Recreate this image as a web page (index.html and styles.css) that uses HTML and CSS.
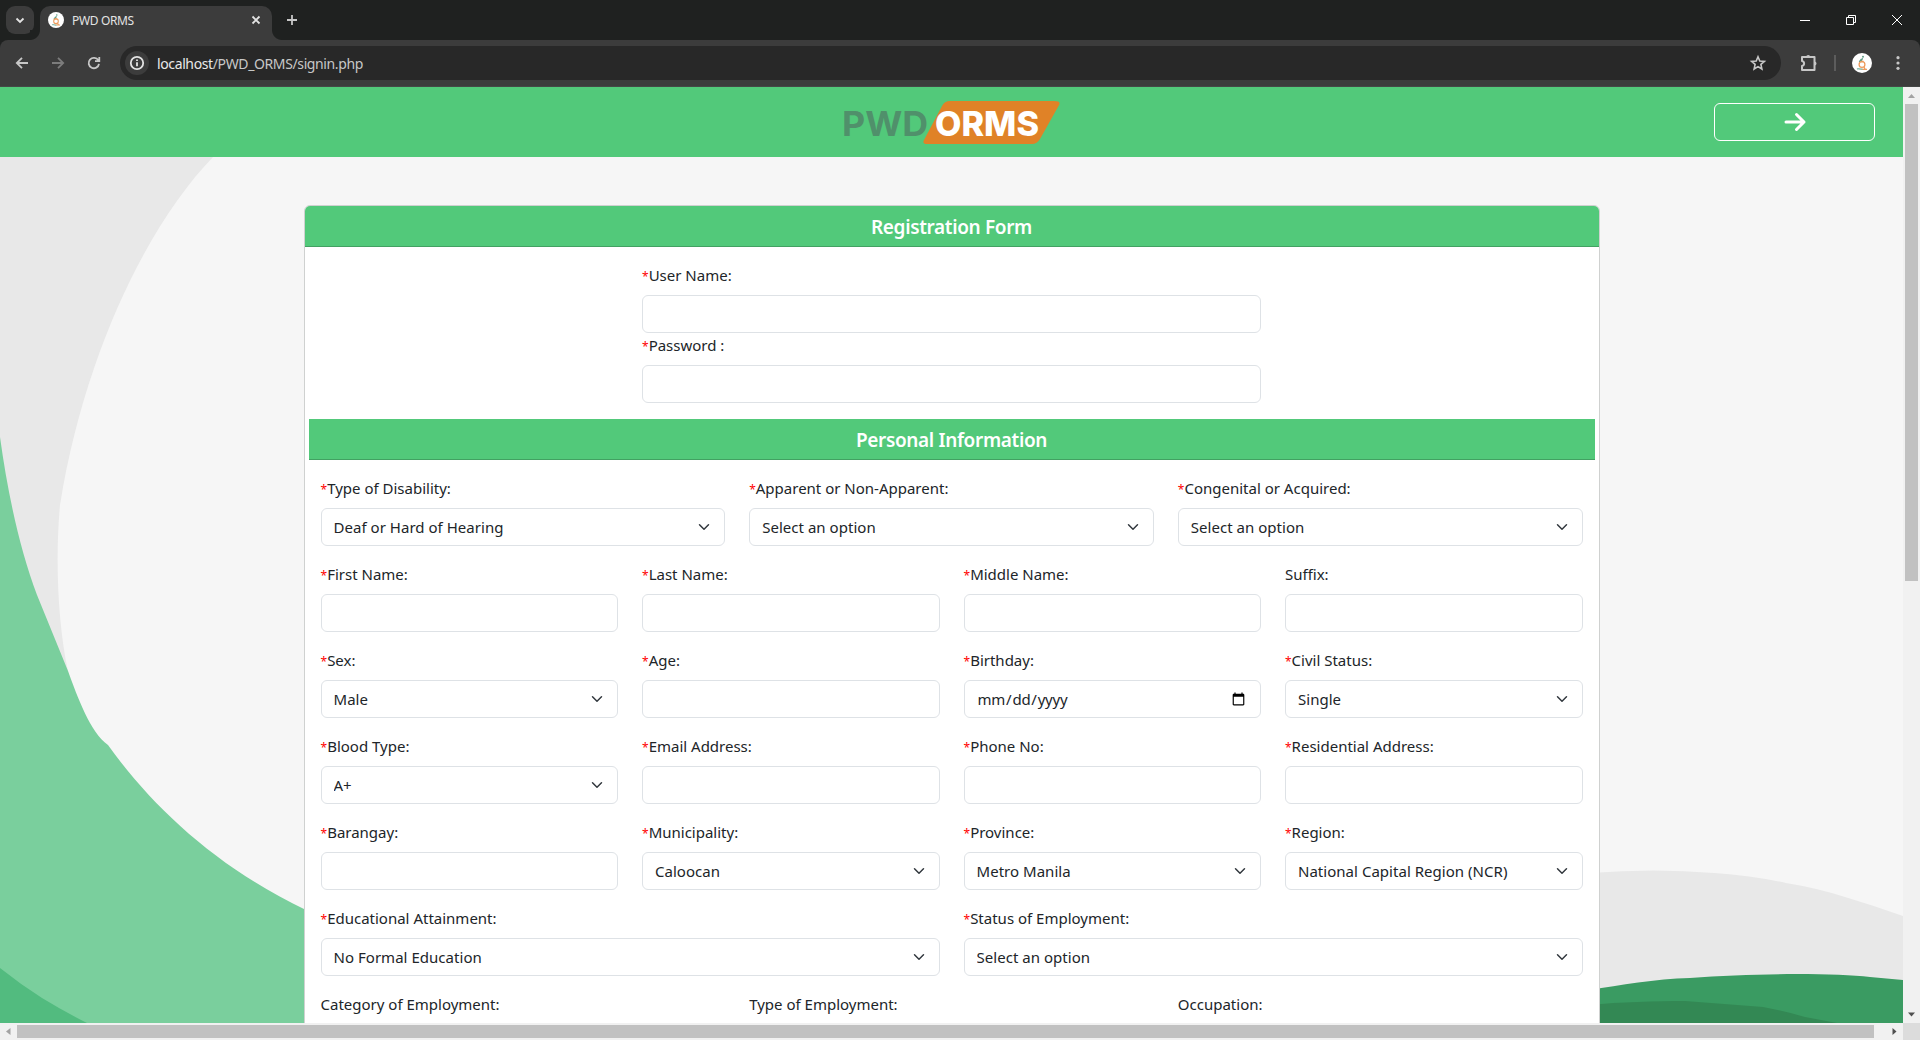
FILE: index.html
```html
<!DOCTYPE html>
<html lang="en">
<head>
<meta charset="utf-8">
<title>PWD ORMS</title>
<link rel="stylesheet" href="styles.css">
</head>
<body>
<svg width="0" height="0" class="defs" aria-hidden="true">
  <symbol id="site-icon" viewBox="0 0 20 20">
    <circle cx="10" cy="10" r="10" fill="#fff"/>
    <circle cx="11" cy="3.800" r="1" fill="#5f9c85"/>
    <path d="M10.600 5.300 9 8.500M9.600 6 7.300 9" stroke="#5f9c85" stroke-width="1.300" fill="none"/>
    <circle cx="10" cy="11.500" r="2.900" stroke="#ee9b5c" stroke-width="1.300" fill="none"/>
    <path d="M9 8.500h2.500M12 14l1 2M9 16.300h6" stroke="#ee9b5c" stroke-width="1.300" fill="none"/>
    <path d="M5 16c2-.6 3 .3 5.500.3" stroke="#8dbfb1" stroke-width="1.500" fill="none"/>
  </symbol>
</svg>
<div class="window">
  <header class="tabstrip">
    <button class="tab-search" aria-label="Search tabs"><svg width="28" height="28" viewBox="0 0 28 28"><path d="M10.500 12.500 14 16l3.500-3.500" class="line bright"/></svg></button>
    <div class="tab">
      <svg width="16" height="16"><use href="#site-icon"/></svg>
      <span class="tab-title">PWD ORMS</span>
      <svg width="16" height="16" viewBox="0 0 16 16"><path d="m4.500 4.500 7 7m0-7-7 7" class="line bright"/></svg>
    </div>
    <svg class="new-tab" width="16" height="16" viewBox="0 0 16 16"><path d="M8 3v10M3 8h10" class="line"/></svg>
    <div class="window-controls">
      <svg width="46" height="40" viewBox="0 0 46 40"><path d="M18 20.500h10" stroke="#fff"/></svg>
      <svg width="46" height="40" viewBox="0 0 46 40"><path d="M18.500 17.500h7v7h-7zM20.500 17v-1.500h7v7H26" stroke="#fff" fill="none"/></svg>
      <svg width="46" height="40" viewBox="0 0 46 40"><path d="m18 15 10 10m0-10L18 25" stroke="#fff"/></svg>
    </div>
  </header>
  <nav class="toolbar">
    <svg width="16" height="16" viewBox="0 0 16 16"><path d="M14 8H3m5-5.200L2.800 8 8 13.200" class="line"/></svg>
    <svg width="16" height="16" viewBox="0 0 16 16"><path d="M2 8h11M8 2.800 13.200 8 8 13.200" class="line dim"/></svg>
    <svg width="16" height="16" viewBox="0 0 16 16"><path d="M13 8.800A5.200 5.200 0 1 1 12.300 5.300M13.300 2v4.200H9" class="line"/></svg>
    <div class="omnibox">
      <span class="site-info"><svg width="16" height="16" viewBox="0 0 16 16"><circle cx="8" cy="8" r="6.200" class="line bright"/><path d="M8 7.200v4M8 4.500v1.600" class="line bright"/></svg></span>
      <span class="url"><b>localhost</b>/PWD_ORMS/signin.php</span>
      <svg width="18" height="18" viewBox="0 0 18 18"><path d="m9 2.700 1.800 4.300 4.600.4-3.500 3 1 4.600L9 12.600 5.100 15l1-4.600-3.500-3 4.600-.4z" class="line thin"/></svg>
    </div>
    <svg class="extensions" width="20" height="20" viewBox="0 0 20 20"><path d="M3 4h12.500v13H3v-4c2.800-.5 2.800-4.500 0-5z" class="line round"/><path d="M7.200 4a2 2 0 0 1 4 0zM15.500 8.500a2 2 0 0 1 0 4z" fill="#c7c7c7"/></svg>
    <span class="divider"></span>
    <svg class="profile" width="20" height="20"><use href="#site-icon"/></svg>
    <svg class="menu" width="16" height="16" viewBox="0 0 16 16" fill="#c7c7c7"><circle cx="8" cy="2.700" r="1.600"/><circle cx="8" cy="8" r="1.600"/><circle cx="8" cy="13.300" r="1.600"/></svg>
  </nav>
  <div class="viewport">
    <main class="page">
      <svg class="backdrop" width="1903" height="936" viewBox="0 87 1903 936" aria-hidden="true">
        <path fill="#e8e8e8" d="M0 157H213C150 222 85 350 60 505C55 560 58 625 68 671L80 720H0z"/>
        <path fill="#7acf9d" d="M0 437C8 495 20 550 37 595L68 671C78 698 90 732 108 745C153 808 218 868 306 910V1023H0z"/>
        <path fill="#52bb7f" d="M0 968Q20 984 42 998Q65 1012 87 1023H0z"/>
        <path fill="#e8e8e8" d="M1590 873Q1655 868 1714 873Q1755 876 1786 883Q1817 888 1845 897Q1875 906 1903 916V1023H1590z"/>
        <path fill="#3a9b62" d="M1590 990C1620 985 1655 979 1690 978C1755 973 1835 973 1870 977L1903 980V1023H1590z"/>
        <path fill="#338854" d="M1590 1005C1620 1002 1655 1001 1685 1001L1763 1007Q1785 1011 1805 1017L1837 1023H1590z"/>
      </svg>
      <div class="site-header">
        <svg class="logo" width="220" height="50" viewBox="0 0 220 50" role="img" aria-label="PWD ORMS">
          <path d="M106 4h107q8 0 4.500 5L199 42q-3 5-8 5H86q-5 0-3-4L101 9q2.500-5 8-5z" fill="#e08227"/>
          <text x="1" y="39" textLength="86" lengthAdjust="spacingAndGlyphs" class="logo-pwd">PWD</text>
          <text x="94" y="39" textLength="104" lengthAdjust="spacingAndGlyphs" class="logo-orms">ORMS</text>
        </svg>
        <button class="signin" aria-label="Sign in"><svg width="24" height="22" viewBox="0 0 24 22"><path d="M3 11h18M13.500 3.500 21 11l-7.500 7.500" fill="none" stroke="#fff" stroke-width="3" stroke-linecap="round" stroke-linejoin="round"/></svg></button>
      </div>
      <form class="card">
        <h5 class="card-header top">Registration Form</h5>
        <div class="card-body">
          <div class="account">
            <label class="field"><span><i>*</i>User Name:</span><input type="text"></label>
            <label class="field"><span><i>*</i>Password :</span><input type="text"></label>
          </div>
          <h5 class="card-header">Personal Information</h5>
          <div class="fields">
            <label class="field third"><span><i>*</i>Type of Disability:</span><select><option>Deaf or Hard of Hearing</option></select></label>
            <label class="field third"><span><i>*</i>Apparent or Non-Apparent:</span><select><option>Select an option</option></select></label>
            <label class="field third"><span><i>*</i>Congenital or Acquired:</span><select><option>Select an option</option></select></label>
            <label class="field"><span><i>*</i>First Name:</span><input type="text"></label>
            <label class="field"><span><i>*</i>Last Name:</span><input type="text"></label>
            <label class="field"><span><i>*</i>Middle Name:</span><input type="text"></label>
            <label class="field"><span>Suffix:</span><input type="text"></label>
            <label class="field"><span><i>*</i>Sex:</span><select><option>Male</option></select></label>
            <label class="field"><span><i>*</i>Age:</span><input type="text"></label>
            <label class="field"><span><i>*</i>Birthday:</span><input type="date"></label>
            <label class="field"><span><i>*</i>Civil Status:</span><select><option>Single</option></select></label>
            <label class="field"><span><i>*</i>Blood Type:</span><select><option>A+</option></select></label>
            <label class="field"><span><i>*</i>Email Address:</span><input type="text"></label>
            <label class="field"><span><i>*</i>Phone No:</span><input type="text"></label>
            <label class="field"><span><i>*</i>Residential Address:</span><input type="text"></label>
            <label class="field"><span><i>*</i>Barangay:</span><input type="text"></label>
            <label class="field"><span><i>*</i>Municipality:</span><select><option>Caloocan</option></select></label>
            <label class="field"><span><i>*</i>Province:</span><select><option>Metro Manila</option></select></label>
            <label class="field"><span><i>*</i>Region:</span><select><option>National Capital Region (NCR)</option></select></label>
            <label class="field half"><span><i>*</i>Educational Attainment:</span><select><option>No Formal Education</option></select></label>
            <label class="field half"><span><i>*</i>Status of Employment:</span><select><option>Select an option</option></select></label>
            <div class="field third"><span>Category of Employment:</span></div>
            <div class="field third"><span>Type of Employment:</span></div>
            <div class="field third"><span>Occupation:</span></div>
          </div>
        </div>
      </form>
    </main>
    <div class="vbar">
      <svg width="17" height="17" viewBox="0 0 17 17"><path d="M5 11h7L8.500 7z" fill="#a3a3a3"/></svg>
      <span class="thumb"></span>
      <svg width="17" height="17" viewBox="0 0 17 17"><path d="M5 6.500h7l-3.500 4z" fill="#505050"/></svg>
    </div>
    <div class="hbar">
      <svg width="17" height="17" viewBox="0 0 17 17"><path d="M10.500 5v7L6 8.500z" fill="#a3a3a3"/></svg>
      <span class="thumb"></span>
      <svg width="17" height="17" viewBox="0 0 17 17"><path d="M6.500 5v7l4-3.500z" fill="#505050"/></svg>
    </div>
    <div class="corner"></div>
  </div>
</div>
</body>
</html>
```
FILE: styles.css
```css
* { box-sizing: border-box; }
body { margin: 0; overflow: hidden; font-family: "Noto Sans", "Liberation Sans", sans-serif; }
button { padding: 0; border: 0; background: none; }
.defs { position: absolute; }
.window { display: flex; flex-direction: column; width: 1920px; height: 1040px; background: #1f2120; }

/* Browser chrome */
.line { fill: none; stroke: #c7c7c7; stroke-width: 1.8; }
.line.bright { stroke: #e3e3e3; }
.line.dim { stroke: #7c7c7c; }
.line.thin { stroke-width: 1.6; }
.line.round { stroke-linejoin: round; stroke-width: 2; }
.tabstrip { display: flex; align-items: flex-start; height: 40px; background: #1f2120; }
.tab-search { width: 28px; height: 28px; margin: 6px 6px 0; border-radius: 9px; background: #3c3c3c; }
.tab { position: relative; display: flex; align-items: center; width: 232px; height: 34px; margin-top: 6px; padding: 0 8px 6px; border-radius: 10px 10px 0 0; background: #3c3c3c; }
.tab::before, .tab::after { content: ""; position: absolute; bottom: 0; width: 10px; height: 10px; }
.tab::before { left: -10px; background: radial-gradient(circle at 0 0, #1f2120 9.5px, #3c3c3c 10.5px); }
.tab::after { right: -10px; background: radial-gradient(circle at 100% 0, #1f2120 9.5px, #3c3c3c 10.5px); }
.tab-title { flex: 1; padding-left: 8px; color: #e3e3e3; font-size: 12px; letter-spacing: -0.35px; }
.new-tab { margin: 12px 0 0 12px; }
.window-controls { display: flex; margin-left: auto; }
.toolbar { display: flex; align-items: center; height: 47px; padding: 0 14px; border-bottom: 1px solid #454746; border-radius: 8px 8px 0 0; background: #3c3c3c; }
.toolbar > svg { flex: none; }
.toolbar > svg:nth-child(2), .toolbar > svg:nth-child(3) { margin-left: 20px; }
.omnibox { display: flex; align-items: center; width: 1662px; height: 34px; margin-left: 18px; padding: 0 14px 0 5px; border-radius: 17px; background: #282828; }
.site-info { display: grid; place-items: center; width: 24px; height: 24px; border-radius: 12px; background: #3c3c3c; }
.url { flex: 1; padding-left: 8px; color: #c7c7c7; font-size: 14px; letter-spacing: -0.38px; }
.url b { color: #e8e8e8; font-weight: 400; }
.extensions { margin-left: 18px; }
.divider { width: 2px; height: 16px; margin: 0 16px 0 15px; background: #5c5c5c; }
.menu { margin-left: 18px; }

/* Scrolling viewport */
.viewport { display: grid; grid-template: 936px 17px / 1903px 17px; }
.vbar, .hbar { display: flex; background: #f1f1f1; }
.vbar { flex-direction: column; }
.thumb { background: #c1c1c1; }
.vbar .thumb { width: 13px; height: 477px; margin: 0 2px; }
.vbar svg:last-child { margin-top: auto; }
.hbar .thumb { width: 1857px; height: 13px; margin: 2px 0; }
.hbar svg:last-child { margin-left: auto; }
.corner { background: #dcdcdc; }

/* Page */
.page { position: relative; height: 936px; overflow: hidden; background: #f6f6f6; color: #212529; }
.backdrop { position: absolute; inset: 0; }
.site-header { position: relative; display: flex; justify-content: flex-end; align-items: center; height: 70px; padding-right: 28px; background: #52c97a; }
.logo { margin-right: 653px; }
.logo text { font-family: Inter, "Liberation Sans", sans-serif; font-size: 34px; }
.logo-pwd { fill: #50906b; font-weight: 700; }
.logo-orms { fill: #fff; font-weight: 800; }
.signin { display: grid; place-items: center; width: 161px; height: 38px; border: 1px solid #fff; border-radius: 6px; }

.card { position: relative; width: 1296px; margin: 48px 0 0 303.5px; border: 1px solid #cfd1d0; border-radius: 6px; background: #fff; }
.card-header { height: 41px; margin: 0; padding: 9px 0 7px; border-bottom: 1px solid #42a162; background: #52c97a; color: #fff; text-align: center; font-size: 19px; font-weight: 600; line-height: 24px; letter-spacing: -0.35px; }
.card-header.top { border-radius: 5px 5px 0 0; }
.card-body { padding: 16px 4px 0; }
.account { width: 619px; margin: 0 auto 16px; }
.fields { display: grid; grid-template-columns: repeat(12, 1fr); gap: 16px 24px; padding: 16px 12px; }
.field { grid-column: span 3; display: flex; flex-direction: column; gap: 8px; font-size: 15px; line-height: 24px; letter-spacing: 0; }
.field.third { grid-column: span 4; }
.field.half { grid-column: span 6; }
.field > span { height: 24px; }
.field i { color: #f00; font-size: 12px; font-style: normal; line-height: 1; }
.field input, .field select { width: 100%; height: 38px; margin: 0; padding: 6px 12px; border: 1px solid #dee2e6; border-radius: 6px; background: #fff; color: #212529; font: inherit; letter-spacing: inherit; appearance: none; }
.field input[type="date"] { letter-spacing: -0.25px; }
.field select { letter-spacing: 0.03px; background: #fff url("data:image/svg+xml,%3csvg xmlns='http://www.w3.org/2000/svg' viewBox='0 0 16 16'%3e%3cpath fill='none' stroke='%23343a40' stroke-linecap='round' stroke-linejoin='round' stroke-width='2' d='m2 5 6 6 6-6'/%3e%3c/svg%3e") no-repeat right 12px center / 16px 12px; }
```
